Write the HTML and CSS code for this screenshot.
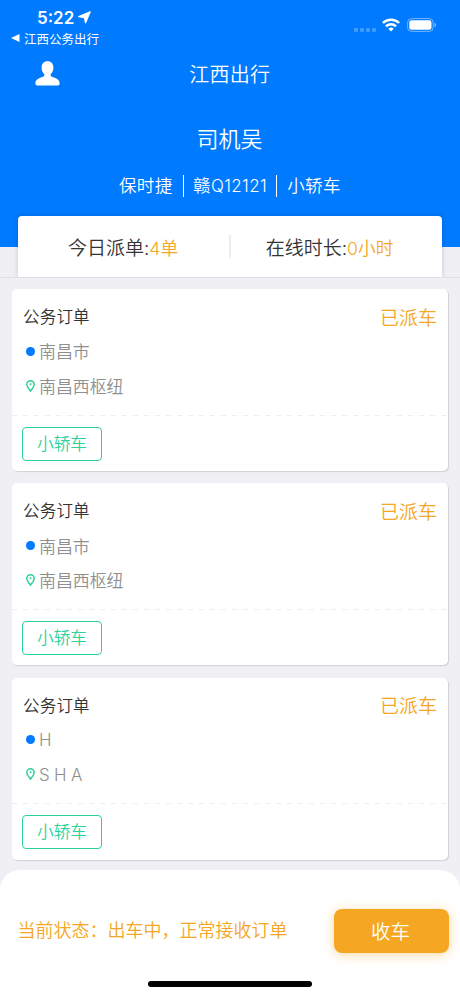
FILE: index.html
```html
<!DOCTYPE html>
<html lang="zh-CN">
    <head>
        <meta charset="UTF-8"/>
        <meta name="viewport" content="width=device-width, initial-scale=1">
        <title>江西出行</title>
        <link rel="stylesheet" href="styles.css">
    </head>
    <body>
        <header class="Header">
            <div class="Status">
                <span class="Time">5:22</span>
                <svg class="Arrow" width="13" height="13" viewBox="0 0 13 13"><path d="M12.2.8 7.6 11.8 6.4 6.6.8 5.6Z" fill="#fff" stroke="#fff" stroke-width="1.2" stroke-linejoin="round"/></svg>
                <span class="Signal"><i></i><i></i><i></i><i></i></span>
                <svg class="Wifi" width="18" height="14" viewBox="0 0 18 14" fill="none" stroke="#fff" stroke-width="2.5">
                    <path d="M.9 5C5.3.5 12.7.5 17.1 5"/>
                    <path d="M4 8.3C6.8 5.5 11.2 5.5 14 8.3"/>
                    <path d="M6.3 10.8C7.7 9.1 10.3 9.1 11.7 10.8L9 13.6Z" fill="#fff" stroke="none"/>
                </svg>
                <svg class="Battery" width="30" height="14" viewBox="0 0 30 14">
                    <rect x=".6" y=".6" width="25.6" height="12.8" rx="4" fill="none" stroke="#fff" stroke-opacity=".45"/>
                    <rect x="2.3" y="2.3" width="22.2" height="9.4" rx="2.3" fill="#fff"/>
                    <path d="M27.5 4.8c2 .7 2 3.7 0 4.4Z" fill="#fff" fill-opacity=".5"/>
                </svg>
            </div>
            <div class="Back">
                <svg width="9" height="8" viewBox="0 0 9 8"><path d="M0 4 8.5 0V8Z" fill="#fff"/></svg>
                <span>江西公务出行</span>
            </div>
            <div class="Nav">
                <svg width="25" height="25" viewBox="0 0 25 25"><path d="M12.5.3C8.7.3 6.6 3 6.6 6.500c0 2.700.9 5 2.500 6.500.6.9.3 2.100-.6 2.500C5.500 16.700.4 18 .4 22c0 1.800.5 2.500 2 2.500h20.200c1.500 0 2-.7 2-2.500 0-4-5.100-5.300-8.100-6.500-.9-.4-1.200-1.600-.6-2.500 1.600-1.500 2.500-3.800 2.500-6.500C18.400 3 16.300.3 12.500.3Z" fill="#fff"/></svg>
                <span class="Title">江西出行</span>
            </div>
            <div class="Driver">司机吴</div>
            <div class="Vehicle">
                <span>保时捷</span>
                <span class="Plate">赣<b>Q12121</b></span>
                <span>小轿车</span>
            </div>
        </header>
        <section class="Stats">
            <div class="Stat">今日派单:<em>4单</em></div>
            <div class="Stat">在线时长:<em>0小时</em></div>
        </section>
        <main class="Orders">
            <article class="Order">
                <div class="Top"><span class="Type">公务订单</span><span class="State">已派车</span></div>
                <div class="Place"><i class="Dot"></i><span>南昌市</span></div>
                <div class="Place">
                    <svg class="Pin" width="9" height="12" viewBox="0 0 9 12"><path d="M4.5 11C3.3 9.3.8 7 .8 4.4a3.7 3.7 0 0 1 7.4 0C8.2 7 5.7 9.3 4.5 11Z"/><circle cx="4.5" cy="4.3" r="1"/></svg>
                    <span>南昌西枢纽</span>
                </div>
                <div class="Bottom"><span class="Tag">小轿车</span></div>
            </article>
            <article class="Order">
                <div class="Top"><span class="Type">公务订单</span><span class="State">已派车</span></div>
                <div class="Place"><i class="Dot"></i><span>南昌市</span></div>
                <div class="Place">
                    <svg class="Pin" width="9" height="12" viewBox="0 0 9 12"><path d="M4.5 11C3.3 9.3.8 7 .8 4.4a3.7 3.7 0 0 1 7.4 0C8.2 7 5.7 9.3 4.5 11Z"/><circle cx="4.5" cy="4.3" r="1"/></svg>
                    <span>南昌西枢纽</span>
                </div>
                <div class="Bottom"><span class="Tag">小轿车</span></div>
            </article>
            <article class="Order">
                <div class="Top"><span class="Type">公务订单</span><span class="State">已派车</span></div>
                <div class="Place"><i class="Dot"></i><span class="Latin">H</span></div>
                <div class="Place">
                    <svg class="Pin" width="9" height="12" viewBox="0 0 9 12"><path d="M4.5 11C3.3 9.3.8 7 .8 4.4a3.7 3.7 0 0 1 7.4 0C8.2 7 5.7 9.3 4.5 11Z"/><circle cx="4.5" cy="4.3" r="1"/></svg>
                    <span class="Latin">S H A</span>
                </div>
                <div class="Bottom"><span class="Tag">小轿车</span></div>
            </article>
        </main>
        <footer class="Footer">
            <div class="Actions">
                <span class="Current">当前状态：出车中，正常接收订单</span>
                <button class="Stop">收车</button>
            </div>
            <div class="Home"></div>
        </footer>
    </body>
</html>
```
FILE: styles.css
```css
*
{
    box-sizing:border-box;
}
body
{
    display:flex;
    flex-direction:column;
    height:996px;
    margin:0;
    overflow:hidden;
    background:#efeff4;
    color:#333;
    font-family:Inter, "Noto Sans CJK SC", sans-serif;
    font-weight:350;
    white-space:nowrap;
}
svg
{
    display:block;
    flex:none;
}
em
{
    font-style:normal;
}

.Header
{
    flex:none;
    height:247px;
    background:#007aff;
    color:#fff;
}
.Status
{
    display:flex;
    align-items:center;
    height:30px;
    padding:6px 23px 0 37px;
}
.Time
{
    width:38px;
    font-size:17px;
    font-weight:600;
    line-height:24px;
}
.Arrow
{
    margin:-1px 0 0 3px;
}
.Signal
{
    display:flex;
    gap:2px;
    margin:24px 6px 0 auto;
}
.Signal i
{
    width:4px;
    height:4px;
    border-radius:1px;
    background:rgba(255,255,255,.25);
}
.Wifi
{
    margin:14px 7px 0 0;
}
.Battery
{
    margin-top:14px;
}
.Back
{
    display:flex;
    align-items:center;
    gap:4px;
    height:16px;
    padding-left:11px;
    font-size:12.5px;
    font-weight:400;
}
.Nav
{
    display:grid;
    grid-template-columns:1fr auto 1fr;
    align-items:center;
    height:54px;
    padding:1px 35px 0 34.5px;
}
.Title
{
    margin-top:-1px;
    font-size:20px;
    letter-spacing:.2px;
}
.Driver
{
    height:78px;
    padding-right:1px;
    font-size:22px;
    line-height:78px;
    text-align:center;
}
.Vehicle
{
    display:flex;
    justify-content:center;
    margin-top:-3px;
    font-size:17.5px;
    line-height:22px;
    letter-spacing:.5px;
}
.Vehicle span
{
    padding:0 10px;
}
.Vehicle span + span
{
    border-left:1px solid #fff;
}
.Vehicle .Plate
{
    padding:0 9px;
}
.Vehicle b
{
    font-size:17px;
    font-weight:350;
    letter-spacing:.4px;
}

.Stats
{
    display:flex;
    flex:none;
    align-items:center;
    height:61px;
    margin:-31px 18px 0;
    border-radius:4px 4px 0 0;
    background:#fff;
    box-shadow:0 0 5px rgba(0,0,0,.18);
    font-size:19px;
}
.Stat
{
    width:211px;
    height:23px;
    padding-right:1px;
    line-height:27px;
    text-align:center;
}
.Stat + .Stat
{
    width:213px;
    padding-right:14px;
    border-left:2px solid #eee;
}
.Stat em
{
    color:#f5a623;
    font-size:17.7px;
}

.Orders
{
    display:flex;
    flex-direction:column;
    flex:none;
    gap:12.3px;
    position:relative;
    height:593px;
    padding:11px 12px 0;
    border-top:1px solid #dedee3;
    background:#efeff4;
}
.Order
{
    flex:none;
    height:182px;
    border-radius:5px;
    background:#fff;
    box-shadow:1px 1px 1px rgba(0,0,0,.13);
}
.Top
{
    display:flex;
    align-items:center;
    justify-content:space-between;
    height:45px;
    padding:9px 11px 0;
}
.Type
{
    font-size:16.5px;
    letter-spacing:.2px;
}
.State
{
    color:#f5a623;
    font-size:19px;
}
.Place
{
    display:flex;
    align-items:center;
    gap:4px;
    height:34.5px;
    padding-left:14px;
    color:#8f8f8f;
    font-size:16.9px;
}
.Place span
{
    margin-top:-1px;
}
.Place .Latin
{
    margin-top:1px;
    font-weight:300;
    letter-spacing:-.2px;
}
.Dot
{
    width:9px;
    height:9px;
    border-radius:50%;
    background:#007aff;
}
.Pin path
{
    fill:none;
    stroke:#2ad19a;
    stroke-width:1.5;
}
.Pin circle
{
    fill:#2ad19a;
}
.Bottom
{
    height:56px;
    margin-top:11.5px;
    padding:12px 10px;
    background:repeating-linear-gradient(90deg, #eee 0 5px, transparent 5px 11px) 0 0 / 100% 1px no-repeat;
}
.Tag
{
    display:block;
    width:80px;
    height:34px;
    border:1px solid #2ad19a;
    border-radius:4px;
    color:#2ad19a;
    font-size:16.7px;
    line-height:32px;
    text-align:center;
}

.Footer
{
    position:relative;
    flex:none;
    height:126px;
    border-radius:20px 20px 0 0;
    background:#fff;
}
.Actions
{
    display:flex;
    align-items:center;
    justify-content:space-between;
    height:111px;
    padding:10px 11.5px 0 17.5px;
}
.Current
{
    margin-top:-3px;
    color:#f5a623;
    font-size:18px;
}
.Stop
{
    width:115px;
    height:44px;
    padding:0 1px 1px 0;
    border:none;
    border-radius:8px;
    background:#f5a623;
    box-shadow:0 2px 12px rgba(245,166,35,.4);
    color:#fff;
    font-family:inherit;
    font-size:19.5px;
    font-weight:350;
}
.Home
{
    width:164px;
    height:6px;
    margin:0 auto;
    border-radius:3px;
    background:#000;
}
```
